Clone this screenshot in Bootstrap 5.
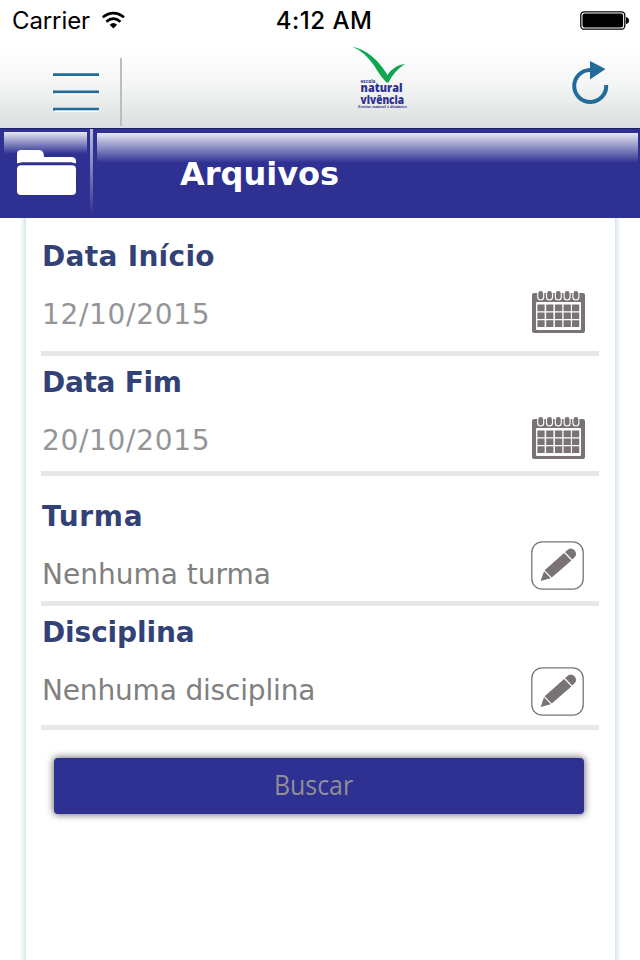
<!DOCTYPE html>
<html lang="pt">
<head>
<meta charset="utf-8">
<meta name="viewport" content="width=device-width, initial-scale=1">
<title>Arquivos</title>
<link href="https://cdn.jsdelivr.net/npm/bootstrap@5.3.0/dist/css/bootstrap.min.css" rel="stylesheet">
<style>
body{font-family:"DejaVu Sans",Verdana,sans-serif;background:#fff;height:960px;overflow:hidden}
svg{display:block;flex:none;overflow:visible}
.app-top{height:128px;background:linear-gradient(#fff 0,#fff 48px,#f4f5f5 85px,#dcdedf 127px)}
.status{height:40px;font:24px/40px Inter,sans-serif;color:#000;padding:0 11px 0 12px}
.status-side{width:150px}
.carrier{letter-spacing:-.1px;padding-top:2px}
.clock{letter-spacing:.5px;font-weight:500;padding:2px 0 0 7px}
.tools{height:88px;padding-left:53px;padding-right:32px}
.sep{width:2px;height:68px;background:#bcbdbf;margin:18px 0 0 21px}
.burger{margin-top:32px}
.brand-logo{margin:5px auto 0 231px}
.reload{margin-top:21px}
.title-bar{height:90px;background:#2e3092;border-top:1px solid #1b1f66}
.folder-cell{width:83px;height:86px;margin:3px 0 0 4px;background:linear-gradient(#e7e7f3,#2e3092 22px)}
.folder-cell svg{margin:18px 0 0 13px}
.shine{width:3px;height:86px;margin-left:3px;background:linear-gradient(#babbdc,#7779b8 45px,#2e3092)}
.title-cell{margin:4px 2px 0 4px;background:linear-gradient(#e7e7f3,#2e3092 30px);height:85px}
.title-cell h1{font-size:32px;line-height:40px;font-weight:700;color:#fff;margin:21px 0 0 83px}
.sheet{height:742px;margin:0 19px 0 20px;border-left:6px solid;border-right:6px solid;border-image:linear-gradient(90deg,#fff 0,#dae5ec 6px,#dae5ec calc(100% - 6px),#fff 100%) 0 6 0 6;padding:0 16px 0 15px}
.field{border-bottom:5px solid #e6e7e8;padding-left:1px;padding-right:14px}
.f1{height:138px;padding-top:21px}.f2{height:120px;padding-top:9px}
.f3{height:130px;padding-top:23px}.f4{height:124px;padding-top:9px}
.f3,.f4{padding-right:15px}
.field label{font-size:28px;line-height:36px;font-weight:700;color:#334276;display:block}
.f1 label{letter-spacing:.3px}.f2 label{letter-spacing:-.3px}.f3 label{letter-spacing:.7px}.f4 label{letter-spacing:-.12px}
.field .value{font-size:28px;line-height:36px;color:#939598;margin-top:22px;white-space:nowrap;letter-spacing:.68px}
.field .value.none{color:#808080;letter-spacing:0}
.f4 .value.none{letter-spacing:-.17px}
.cal{margin-top:51px}.f3 .pen{margin-top:42px}.f4 .pen{margin-top:52px}
.search{display:block;width:530px;height:56px;margin:28px 0 0 13px;padding:0 10px 5px 0;border:0;border-radius:4px;background:#2e3092;color:#8f9096;font:28px/50px "Open Sans",sans-serif;box-shadow:0 0 7px 1px rgba(0,0,0,.55)}
.search:hover{background:#2e3092;color:#8f9096}
.search span{display:inline-block;transform:scaleX(.89)}
</style>
<script src="https://cdn.jsdelivr.net/npm/bootstrap@5.3.0/dist/js/bootstrap.bundle.min.js"></script>
</head>
<body>
<svg width="0" height="0" class="position-absolute">
<defs>
<g id="calendar">
<rect y="3" width="53" height="40" rx="2" fill="#7a7374"/>
<rect x="4" y="12" width="45" height="28" rx="1" fill="#fff"/>
<g fill="#7a7374" stroke="#fff" stroke-width="1.1"><rect x="5.7" y=".5" width="6" height="9.5" rx="3"/><rect x="14.5" y=".5" width="6" height="9.5" rx="3"/><rect x="23.3" y=".5" width="6" height="9.5" rx="3"/><rect x="32.1" y=".5" width="6" height="9.5" rx="3"/><rect x="40.9" y=".5" width="6" height="9.5" rx="3"/></g>
<path d="M9 14.5V37M17.8 14.5V37M26.6 14.5V37M35.2 14.5V37M43.6 14.5V37" stroke="#7a7374" stroke-width="7.3"/>
<path d="M5 21.9H48M5 29.7H48" stroke="#fff" stroke-width="1.3"/>
</g>
<g id="pencil">
<rect x=".8" y=".8" width="51.4" height="47.4" rx="10.5" fill="#fff" stroke="#7a7374" stroke-width="1.3"/>
<g fill="#7a7374"><path d="M9.6 40L13 30.3L19.8 37.2Z"/><path d="M13.6 29.2L33.1 12L40.4 19.4L20.8 36.6Z"/><path d="M34 11.1L37.4 8.3Q40.5 6.3 43.4 9.2Q46.6 12.6 43.8 16.1L41.2 18.6Z"/></g>
</g>
</defs>
</svg>
<header class="app-top">
<div class="status d-flex justify-content-between align-items-center">
<div class="status-side d-flex align-items-center"><span class="carrier">Carrier</span>
<svg class="ms-2 ps-1" width="29" height="20" viewBox="0 0 29 20"><g fill="none" stroke="#000" stroke-width="3"><path d="M.8 6.9Q13.2 -2.7 25.6 6.9"/><path d="M5 11.9Q13.2 5 21.4 11.9"/></g><path d="M8.9 15.5Q13.2 11.3 17.5 15.5L13.2 19.8Z"/></svg></div>
<span class="clock">4:12 AM</span>
<div class="status-side d-flex justify-content-end"><svg width="49" height="20" viewBox="0 0 49 20"><rect x=".8" y="1.8" width="44" height="17.4" rx="3.5" fill="#fff" stroke="#000" stroke-width="1.3"/><rect x="2.5" y="3.4" width="40.6" height="14.2" rx="2"/><path d="M46 7Q49 7.5 49 10.5T46 14Z"/></svg></div>
</div>
<div class="tools d-flex align-items-start">
<svg class="burger" width="46" height="40" viewBox="0 0 46 40"><path d="M0 2.7H46M0 19.9H46M0 37.1H46" stroke="#226c9c" stroke-width="2.8"/><path d="M2 22.2H46M2 39.3H46" stroke="#fff" stroke-width="1.4"/></svg>
<span class="sep"></span>
<svg class="brand-logo" width="60" height="68" viewBox="0 0 60 68"><path d="M-1 1.5Q20 6 34.5 30Q41 20 52 19Q41 26 35.5 37.5H33.5Q28 32 21 20.5Q12 7 -1 1.5Z" fill="#0ea750"/>
<g fill="#2e3092" font-family="Open Sans,sans-serif"><text x="7.5" y="38.2" font-size="5.5" font-weight="700" textLength="15" lengthAdjust="spacingAndGlyphs">escola</text><g font-weight="800"><text x="7.6" y="46.7" font-size="13" textLength="42" lengthAdjust="spacingAndGlyphs">natural</text><text x="7.6" y="58.7" font-size="13" textLength="43.5" lengthAdjust="spacingAndGlyphs">vivência</text></g><text x="5" y="63" font-size="4.5" font-family="Liberation Serif,serif" font-style="italic" font-weight="700" textLength="49" lengthAdjust="spacingAndGlyphs">Ensino natural e dinâmico</text></g></svg>
<svg class="reload" width="37" height="46" viewBox="0 0 37 46"><path d="M19 9A16 16 0 1 0 35.2 24" fill="none" stroke="#226c9c" stroke-width="4"/><path d="M19 0L34.5 8L19 18.5Z" fill="#226c9c"/></svg>
</div>
</header>
<div class="title-bar d-flex">
<div class="folder-cell"><svg width="59" height="46" viewBox="0 0 59 46"><path d="M0 15V4Q0 0 4 0H22Q27 0 27 7H54Q59 7 59 11V15Q57 12.5 54 12.5H5Q2 12.5 0 15Z" fill="#fff"/><path d="M0 15Q1 13.6 5 13.6H54Q58 13.6 59 15" fill="none" stroke="#2e3092" stroke-width="2"/><rect y="15.3" width="59" height="29.7" rx="4" fill="#fff"/></svg></div>
<div class="shine"></div>
<div class="title-cell flex-grow-1 d-flex"><h1>Arquivos</h1></div>
</div>
<main class="sheet">
<div class="field f1 d-flex justify-content-between align-items-start"><div><label>Data Início</label><div class="value">12/10/2015</div></div><svg class="cal" width="53" height="44"><use href="#calendar"/></svg></div>
<div class="field f2 d-flex justify-content-between align-items-start"><div><label>Data Fim</label><div class="value">20/10/2015</div></div><svg class="cal" width="53" height="44"><use href="#calendar"/></svg></div>
<div class="field f3 d-flex justify-content-between align-items-start"><div><label>Turma</label><div class="value none">Nenhuma turma</div></div><svg class="pen" width="53" height="49"><use href="#pencil"/></svg></div>
<div class="field f4 d-flex justify-content-between align-items-start"><div><label>Disciplina</label><div class="value none">Nenhuma disciplina</div></div><svg class="pen" width="53" height="49"><use href="#pencil"/></svg></div>
<button type="button" class="btn search"><span>Buscar</span></button>
</main>
</body>
</html>
